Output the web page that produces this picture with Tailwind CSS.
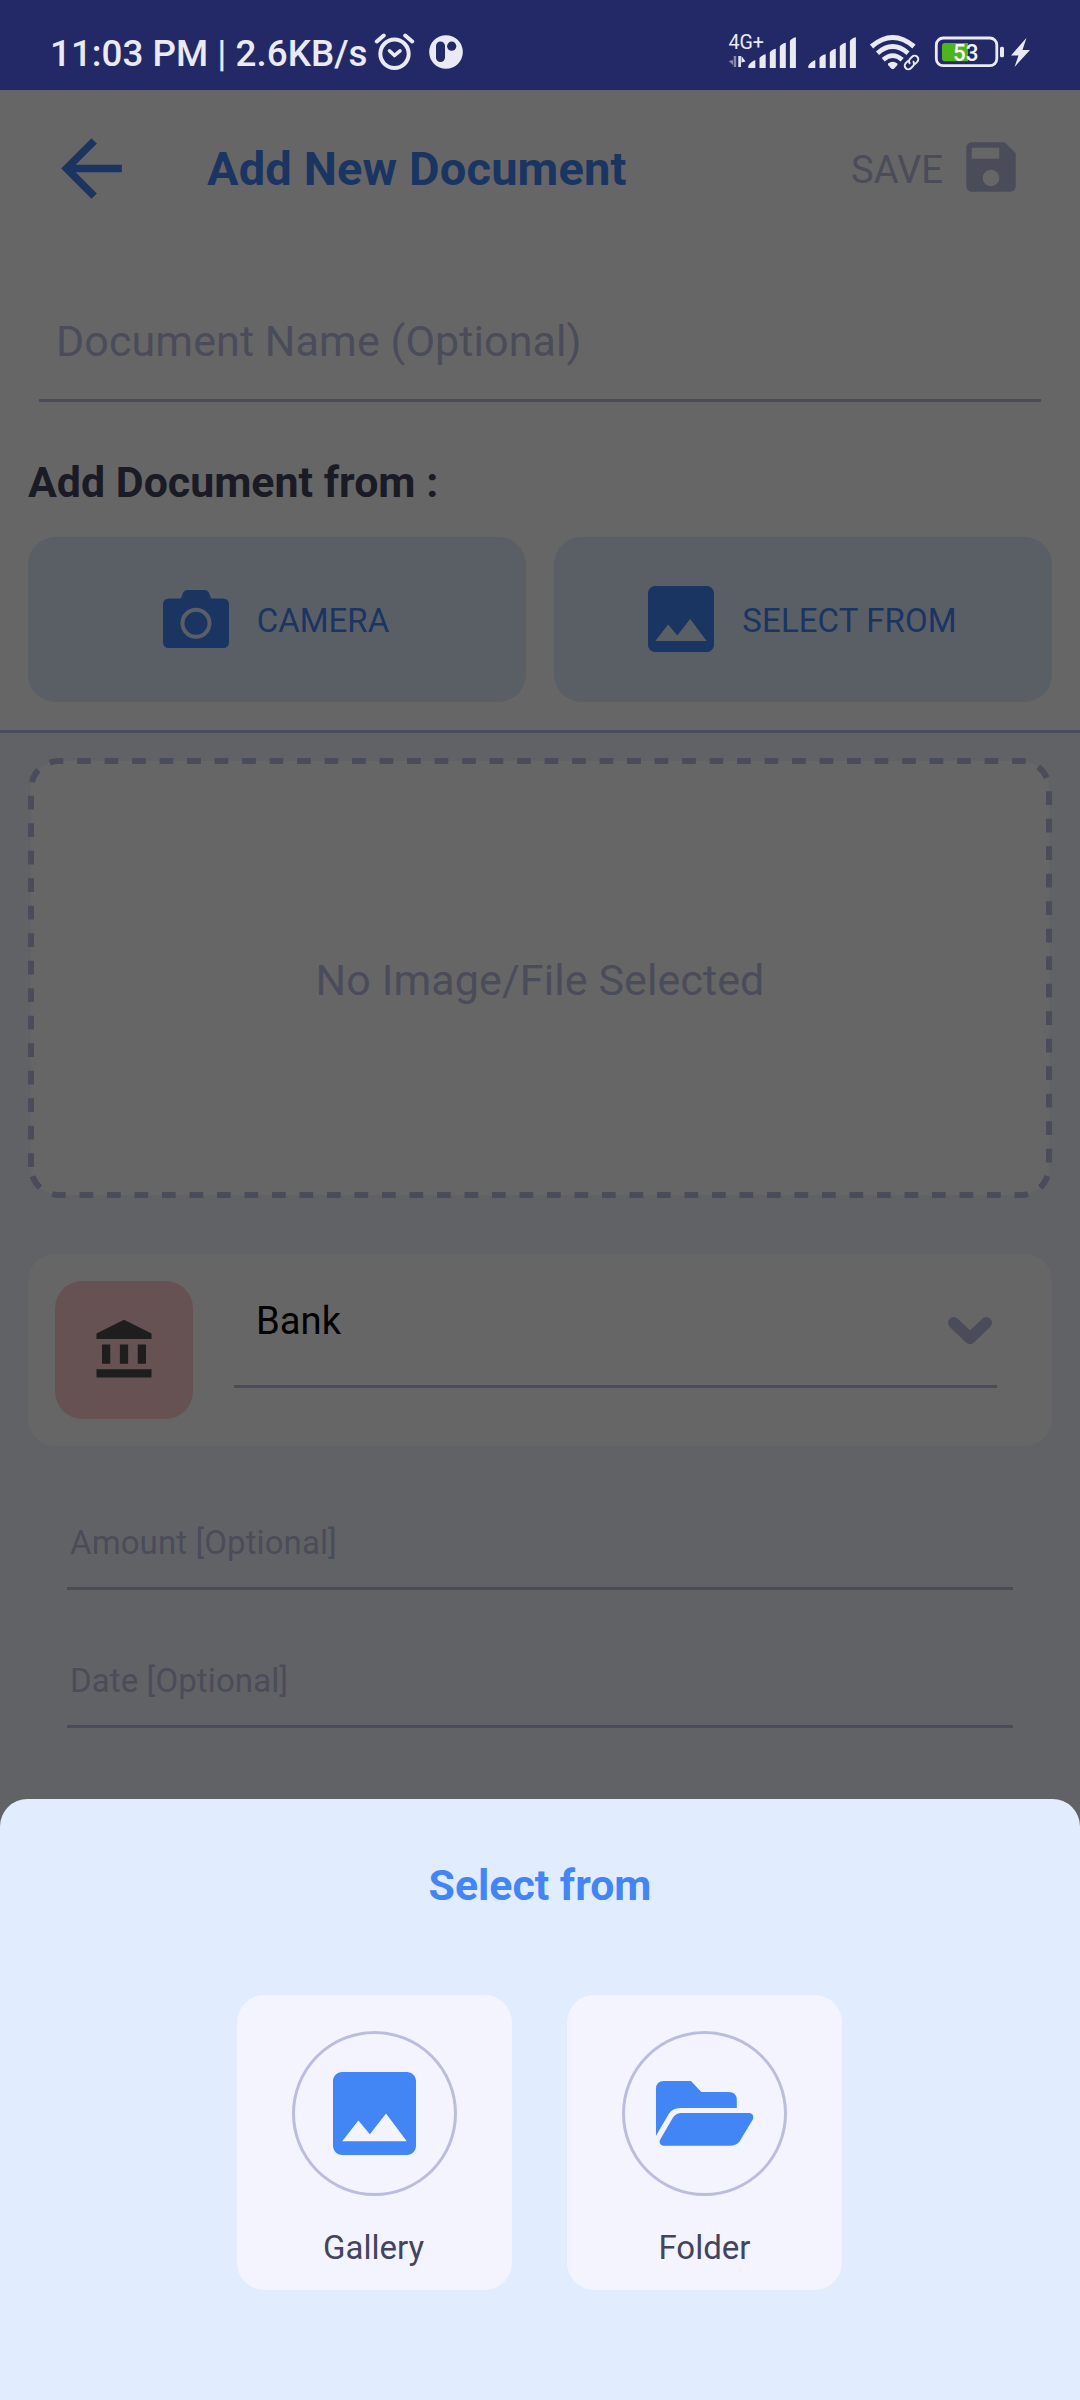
<!DOCTYPE html>
<html lang="en">
<head>
<meta charset="utf-8">
<title>Add New Document</title>
<script src="https://cdn.jsdelivr.net/npm/@tailwindcss/browser@4"></script>
</head>
<body class="relative w-[1080px] h-[2400px] overflow-hidden flex flex-col font-['Roboto',sans-serif] bg-[#f3f5ff]">

<!-- Status bar -->
<header class="h-[90px] shrink-0 bg-[#232866] text-[#e9eaf4] flex items-center pt-[18px] pl-[50px] pr-[49px]">
  <span class="text-[36.8px] leading-[44px] font-medium whitespace-nowrap w-[317px]">11:03 PM | 2.6KB/s</span>
  <svg class="ml-[6px] -mt-1 shrink-0" width="42" height="40" viewBox="373 32 42 40" fill="none" stroke="#e9eaf4" stroke-linecap="round" stroke-linejoin="round">
    <circle cx="394.500" cy="53.800" r="14.200" stroke-width="4"/>
    <path d="M389.500 50.800l5 4.700l5.500-4.700" stroke-width="3.600"/>
    <path d="M376.800 41.500l7-6M412.200 41.500l-7-6" stroke-width="4"/>
  </svg>
  <svg class="ml-[13px] -mt-1 shrink-0" width="36" height="36" viewBox="428 34 36 36">
    <circle cx="446" cy="52" r="16.800" fill="#e9eaf4"/>
    <rect x="436" y="41.500" width="9" height="20.500" rx="4.500" fill="#232866"/>
    <circle cx="451.700" cy="46.200" r="4.600" fill="#232866"/>
  </svg>

  <div class="ml-auto flex items-center -mt-1">
    <svg class="overflow-visible" width="130" height="48" viewBox="727 28 130 48" fill="#e9eaf4">
      <text x="728.500" y="49.200" font-size="20" textLength="35.500" lengthAdjust="spacingAndGlyphs" font-family="Roboto, sans-serif">4G+</text>
      <path d="M733 60v5l-4.300-4zM733.700 56h2.500v11h-2.500z" opacity=".5"/>
      <path d="M738.300 56h2.600v11h-2.600zM741.500 56l4 5.500-4 1z"/>
      <g id="bars">
        <path d="M748.300 68v-2q1.500-3.500 7-6v8zM759.500 68v-10q1.500-2.800 6.200-3.800V68zM769.800 68V52.500q1.500-2.800 6-3.800V68zM779.800 68V46.500q1.500-2.800 6-3.800V68zM789.900 68V41q1.500-2.800 6-3.800V68z"/>
      </g>
      <use href="#bars" x="60"/>
    </svg>
    <svg class="ml-[12px]" width="51" height="40" viewBox="869 32 51 40" fill="none" stroke="#e9eaf4">
      <path d="M871.500 46.500Q892.700 28.500 914 46.500" stroke-width="5"/>
      <path d="M877.500 53.200Q892.700 40 908 53.200" stroke-width="4.800"/>
      <path d="M883.200 59.700Q892.700 51.500 902.200 59.700" stroke-width="4.600"/>
      <path d="M888 63.500q4.700-3.500 9.400 0v1.500l-3.700 4h-2l-3.700-4z" fill="#e9eaf4" stroke="none"/>
      <g stroke-width="2" transform="rotate(-45 911.500 62.500)">
        <path d="M911 58.700h-2.500a3.800 3.800 0 0 0 0 7.600h2.500M912 58.700h3.500a3.800 3.800 0 0 1 0 7.600h-3.500M908.500 62.500h7" stroke="#232866" stroke-width="5"/>
        <path d="M910.500 58.900h-3.500a3.600 3.600 0 0 0 0 7.200h3a3.500 3.500 0 0 0 3.500-3.500M912.500 66.100h3.500a3.600 3.600 0 0 0 0-7.200h-3a3.500 3.500 0 0 0-3.500 3.500"/>
      </g>
    </svg>
    <svg class="ml-[14px]" width="97" height="40" viewBox="934 32 97 40">
      <rect x="936.300" y="38" width="60.500" height="27.700" rx="7" fill="none" stroke="#e9eaf4" stroke-width="2.800"/>
      <path d="M945 43h23v18.300h-23q-3 0-3-3v-12.300q0-3 3-3z" fill="#50b41e"/>
      <rect x="1000" y="46.700" width="4" height="10.600" rx="1.500" fill="#e9eaf4"/>
      <text x="953" y="61.300" font-size="23" font-weight="500" font-family="Roboto, sans-serif" fill="#f4f5fa" textLength="25.500" lengthAdjust="spacingAndGlyphs">53</text>
      <path d="M1026.500 37.700L1011 55.500h7.500L1014.500 67L1030 50h-7.500z" fill="#e9eaf4"/>
    </svg>
  </div>
</header>

<main class="relative flex-1 flex flex-col bg-[#f3f5ff]">
  <section class="bg-white border-b-[3px] border-[#bbbddf] pb-[28px]">
    <!-- App bar -->
    <div class="h-[158px] flex items-center pl-[46px] pr-[56px]">
      <svg class="-mt-[1px]" width="91" height="91" viewBox="0 0 24 24" fill="#4285f4"><path d="M20 11H7.830l5.590-5.590L12 4l-8 8 8 8 1.410-1.410L7.830 13H20v-2z"/></svg>
      <h1 class="ml-[70px] text-[47px] leading-[60px] tracking-[0.15px] font-bold text-[#4285f4] whitespace-nowrap">Add New Document</h1>
      <div class="ml-auto flex items-center gap-[15px]">
        <span class="text-[38.2px] leading-[48px] mt-[1px] text-[#bbbddf]">SAVE</span>
        <svg class="-mt-[4px]" width="66" height="66" viewBox="0 0 24 24" fill="#bbbddf"><path d="M17 3H5c-1.110 0-2 .9-2 2v14c0 1.100.89 2 2 2h14c1.100 0 2-.9 2-2V7l-4-4zm-5 16c-1.660 0-3-1.340-3-3s1.340-3 3-3 3 1.340 3 3-1.340 3-3 3zm3-10H5V5h10v4z"/></svg>
      </div>
    </div>

    <div class="mx-[39px] h-[154px] border-b-[3px] border-[#bbbddf] pt-[63px] pl-[17px] text-[43px] leading-[60px] tracking-[0.1px] text-[#bbbddf]">Document Name (Optional)</div>

    <h2 class="pt-[50px] px-[28px] text-[42.9px] leading-[60px] font-bold text-[#44445c]">Add Document from :</h2>

    <div class="mt-[25px] px-[28px] grid grid-cols-2 gap-[28px]">
      <button class="h-[165px] rounded-[27.5px] bg-[#e1edff] flex items-center justify-center gap-[28px] pr-[2px] text-[#4285f4] text-[33px]">
        <svg class="-mt-[2px]" width="66" height="66" viewBox="0 0 66 66" fill="currentColor">
          <path d="M6 12.500H18L19.500 8Q21 4 25 4H41Q45 4 46.500 8L48 12.500H60Q66 12.500 66 18.500V56Q66 62 60 62H6Q0 62 0 56V18.500Q0 12.500 6 12.500z"/>
          <circle cx="33" cy="37.300" r="13.500" fill="none" stroke="#e1edff" stroke-width="4"/>
        </svg>
        <span class="leading-[40px] mt-[2px]">CAMERA</span>
      </button>
      <button class="h-[165px] rounded-[27.5px] bg-[#e1edff] flex items-center justify-center gap-[28px] pr-[1px] text-[#4285f4] text-[33px]">
        <svg class="-mt-[2px]" width="66" height="66" viewBox="3 3 18 18" fill="currentColor"><path d="M21 19V5c0-1.100-.9-2-2-2H5c-1.100 0-2 .9-2 2v14c0 1.100.9 2 2 2h14c1.100 0 2-.9 2-2zM8.500 13.500l2.500 3.010L14.500 12l4.500 6H5l3.500-4.500z"/></svg>
        <span class="leading-[40px] mt-[2px] tracking-[0.1px]">SELECT FROM</span>
      </button>
    </div>
  </section>

  <!-- Preview drop area -->
  <div class="relative mt-[25px] mx-[28px] h-[440px] flex items-center justify-center">
    <svg class="absolute inset-0" width="1024" height="440" viewBox="28 758 1024 440">
      <path d="M31 1167V789A28 28 0 0 1 59 761H1021A28 28 0 0 1 1049 789V1167A28 28 0 0 1 1021 1195H59A28 28 0 0 1 31 1167z" fill="#fff" stroke="#bbbddf" stroke-width="6" stroke-dasharray="13.750 13.750"/>
    </svg>
    <span class="relative text-[43px] leading-[60px] mt-[3px] tracking-[0.1px] text-[#bbbddf]">No Image/File Selected</span>
  </div>

  <!-- Category -->
  <div class="mt-[56px] mx-[28px] h-[192px] rounded-[27.5px] bg-white flex items-start p-[27px]">
    <div class="size-[138px] rounded-[27.5px] bg-[#ffcdcd] flex items-center justify-center">
      <svg width="66" height="66" viewBox="0 0 24 24" fill="#4b4b4b"><path d="M4 10h3v7H4zM10.500 10h3v7h-3zM2 19h20v3H2zM17 10h3v7h-3zM12 1L2 6v2h20V6z"/></svg>
    </div>
    <div class="ml-[41px] w-[763px] h-[107px] border-b-[3px] border-[#bbbddf] flex items-start justify-between pl-[22px] pr-[4px]">
      <span class="mt-[16px] text-[38.2px] leading-[48px] text-black">Bank</span>
      <svg class="mt-[34px]" width="46" height="32" viewBox="947 1315 46 32" fill="none" stroke="#bbbddf" stroke-width="11.500" stroke-linecap="round" stroke-linejoin="round"><path d="M953.800 1322.800L970 1338.400L986.200 1322.800"/></svg>
    </div>
  </div>

  <div class="mx-[67px] h-[144px] border-b-[3px] border-[#bbbddf] flex items-end pb-[14px] pl-[3px] text-[33px] leading-[60px] tracking-[0.1px] text-[#bbbddf]">Amount [Optional]</div>
  <div class="mx-[67px] h-[138px] border-b-[3px] border-[#bbbddf] flex items-end pb-[14px] pl-[3px] text-[33px] leading-[60px] tracking-[0.1px] text-[#bbbddf]">Date [Optional]</div>

  <div class="absolute inset-0 bg-black/60"></div>
</main>

<!-- Bottom sheet -->
<div class="absolute inset-x-0 bottom-0 h-[601px] rounded-t-[27.5px] bg-[#e1edff] pt-[56px] flex flex-col items-center">
  <h2 class="text-[42.8px] leading-[60px] font-bold text-[#4285f4]">Select from</h2>
  <div class="mt-[80px] mr-[1px] flex gap-[55px]">
    <div class="w-[275px] h-[295px] rounded-[27.5px] bg-[#f3f4ff] flex flex-col items-center pt-[36px]">
      <div class="size-[165px] rounded-full border-[3px] border-[#bbbddf] flex items-center justify-center">
        <svg width="83" height="83" viewBox="3 3 18 18" fill="#4285f4"><path d="M21 19V5c0-1.100-.9-2-2-2H5c-1.100 0-2 .9-2 2v14c0 1.100.9 2 2 2h14c1.100 0 2-.9 2-2zM8.500 13.500l2.500 3.010L14.500 12l4.500 6H5l3.500-4.500z"/></svg>
      </div>
      <span class="mt-[32px] mr-[2px] text-[33px] leading-[40px] text-[#44445c]">Gallery</span>
    </div>
    <div class="w-[275px] h-[295px] rounded-[27.5px] bg-[#f3f4ff] flex flex-col items-center pt-[36px]">
      <div class="size-[165px] rounded-full border-[3px] border-[#bbbddf] flex items-center justify-center">
        <svg width="98" height="65" viewBox="0 0 98 65" fill="#4285f4">
          <path d="M0 54.700V8Q0 0 8 0H35L45.300 11H72.600Q80.800 11 80.800 19.200V26.900H24Q16.500 27 13 32.400z"/>
          <path d="M25.500 32H93.500Q98.500 33 96.800 38.500L83.500 60.600Q80.500 64.700 75 64.700H7Q2.300 63.500 4.200 58.500L17 36.500Q20 32 25.500 32z"/>
        </svg>
      </div>
      <span class="mt-[32px] text-[33px] leading-[40px] text-[#44445c]">Folder</span>
    </div>
  </div>
</div>
</body>
</html>
